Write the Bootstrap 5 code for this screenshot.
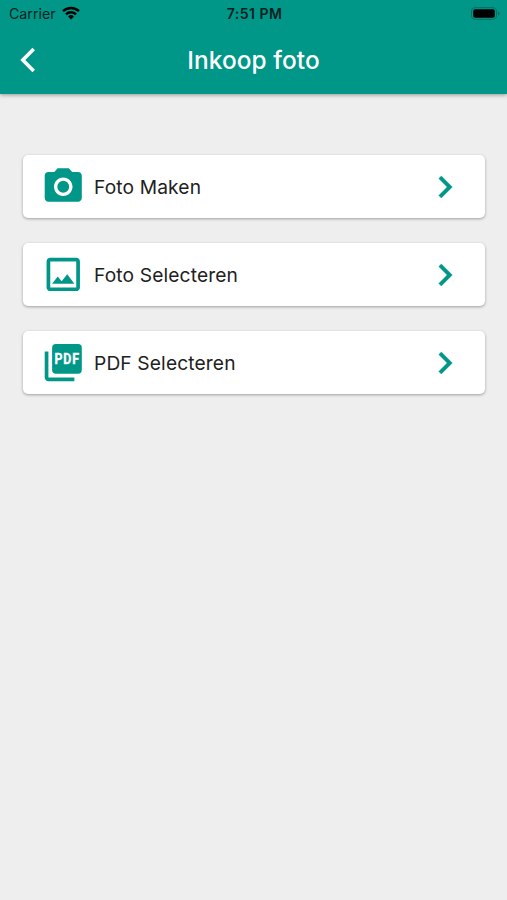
<!DOCTYPE html>
<html lang="nl">
<head>
<meta charset="utf-8">
<meta name="viewport" content="width=device-width, initial-scale=1">
<title>Inkoop foto</title>
<link href="https://cdn.jsdelivr.net/npm/bootstrap@5.3.0/dist/css/bootstrap.min.css" rel="stylesheet">
<style>
body{background:#eee;font-family:Inter,"Liberation Sans",sans-serif;min-height:100vh}
.app-head{background:#009688;height:94px;box-shadow:0 1px 4px rgba(0,0,0,.38)}
.status{height:27px;padding:0 7px 0 9px;color:#04211f;font-size:14.2px;line-height:27px}
.status>*{flex:1 1 0}
.wifi{margin:0 0 2px 6px}
.clock{font-weight:600;font-size:14px;letter-spacing:.5px}
.title-row{height:66px;padding:0 20px}
.title-row>*{flex:1 1 0}
.screen-title{font-size:24.4px;font-weight:500;color:#fff;white-space:nowrap;line-height:30px;letter-spacing:.08px;padding-bottom:1px}
.options{padding:61px 22px 0 23px;gap:25px}
.option{height:63px;border-radius:5px;background:#fff;box-shadow:0 1px 3px rgba(0,0,0,.34);padding:0 18.5px 0 18px;color:#212121;font-size:19.2px}
.teal{color:#009688}
.label{margin-left:8.5px;padding-top:1px;letter-spacing:.13px}
</style>
</head>
<body>
<header class="app-head">
  <div class="status d-flex align-items-center">
    <div class="d-flex align-items-center"><span>Carrier</span>
      <svg class="wifi" width="18" height="14" viewBox="0 0 18 14" fill="none" stroke="#000" stroke-width="2.5"><path d="M1 5.2a11.6 11.6 0 0 1 16 0M4 8.3a7.3 7.3 0 0 1 10 0"/><path d="M9 13.5l-3-3a4.3 4.3 0 0 1 6 0z" fill="#000" stroke="none"/></svg>
    </div>
    <div class="clock text-center">7:51 PM</div>
    <div class="d-flex justify-content-end">
      <svg width="30" height="14" viewBox="0 0 30 14"><rect x="1.5" y=".7" width="25" height="11.6" rx="3.5" fill="none" stroke="#056b61"/><rect x="3.2" y="2.3" width="21.6" height="8.4" rx="2" fill="#000"/><path d="M28 4.5v4q1.5-.6 1.5-2t-1.5-2z" fill="#056b61"/></svg>
    </div>
  </div>
  <div class="title-row d-flex align-items-center">
    <a href="#" class="d-flex" aria-label="Terug"><svg width="16" height="26" viewBox="0 0 16 26" fill="none" stroke="#fff" stroke-width="3.6"><path d="M13.7 1.9 2.8 13l10.9 11.1"/></svg></a>
    <h1 class="screen-title m-0 text-center">Inkoop foto</h1>
    <span></span>
  </div>
</header>
<main class="options d-flex flex-column">
  <div class="option d-flex align-items-center">
    <svg class="teal" width="44.5" height="44.5" viewBox="0 -.3 24 24" fill="currentColor"><path fill-rule="evenodd" d="M9 2 7.17 4H4c-1.1 0-2 .9-2 2v12c0 1.1.9 2 2 2h16c1.1 0 2-.9 2-2V6c0-1.1-.9-2-2-2h-3.17L15 2H9zm3 15c-2.76 0-5-2.24-5-5s2.24-5 5-5 5 2.24 5 5-2.24 5-5 5z"/><circle cx="12" cy="12" r="3.2"/></svg>
    <span class="label flex-grow-1">Foto Maken</span>
    <svg class="teal" width="44" height="44" viewBox="0 0 24 24" fill="currentColor" stroke="currentColor" stroke-width=".2"><path d="M10 6 8.59 7.41 13.17 12l-4.58 4.59L10 18l6-6z"/></svg>
  </div>
  <div class="option d-flex align-items-center">
    <svg class="teal" width="44.5" height="44.5" viewBox="0 -.1 24 24" fill="currentColor"><path d="M19 5v14H5V5h14m0-2H5c-1.1 0-2 .9-2 2v14c0 1.1.9 2 2 2h14c1.1 0 2-.9 2-2V5c0-1.1-.9-2-2-2zm-4.86 8.86-3 3.87L9 13.14 6 17h12l-3.86-5.14z"/></svg>
    <span class="label flex-grow-1">Foto Selecteren</span>
    <svg class="teal" width="44" height="44" viewBox="0 0 24 24" fill="currentColor" stroke="currentColor" stroke-width=".2"><path d="M10 6 8.59 7.41 13.17 12l-4.58 4.59L10 18l6-6z"/></svg>
  </div>
  <div class="option d-flex align-items-center">
    <svg class="teal" width="44.5" height="44.5" viewBox="0 -.2 24 24" fill="currentColor"><rect x="6" y="2" width="16" height="16" rx="2"/><path d="M4 6H2v14c0 1.1.9 2 2 2h14v-2H4V6z"/><text x="7.3" y="12.9" textLength="13.6" lengthAdjust="spacingAndGlyphs" font-family="Roboto,sans-serif" font-weight="700" font-size="8" letter-spacing=".5" fill="#fff" stroke="#fff" stroke-width=".2">PDF</text></svg>
    <span class="label flex-grow-1">PDF Selecteren</span>
    <svg class="teal" width="44" height="44" viewBox="0 0 24 24" fill="currentColor" stroke="currentColor" stroke-width=".2"><path d="M10 6 8.59 7.41 13.17 12l-4.58 4.59L10 18l6-6z"/></svg>
  </div>
</main>
<script src="https://cdn.jsdelivr.net/npm/bootstrap@5.3.0/dist/js/bootstrap.bundle.min.js"></script>
</body>
</html>
